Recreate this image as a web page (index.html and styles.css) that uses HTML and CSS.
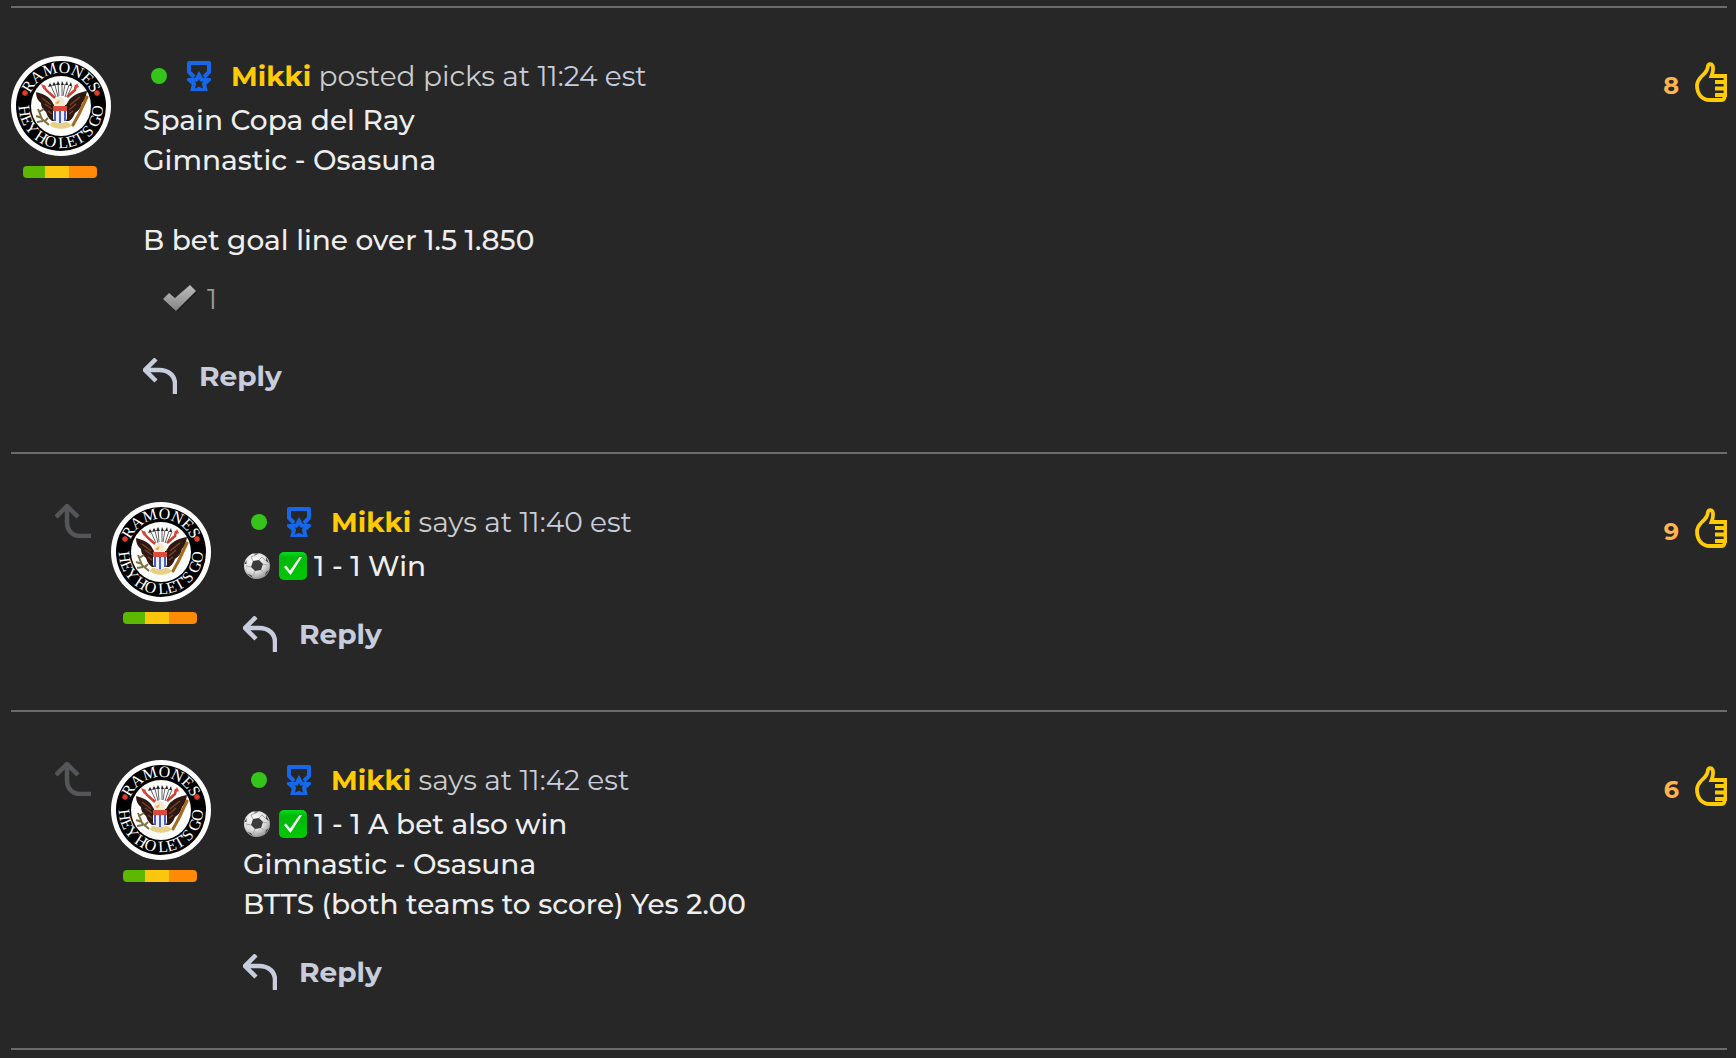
FILE: index.html
```
<!DOCTYPE html>
<html lang="en">
  <head>
    <meta charset="utf-8">
    <meta name="viewport" content="width=device-width, initial-scale=1">
    <title>Picks</title>
    <link rel="stylesheet" href="styles.css">
  </head>

  <body>
    <!-- Shared drawings -->
    <svg class="sprites" aria-hidden="true">
      <defs>
        <linearGradient id="greyCheck" x1="0" y1="0" x2="0" y2="1">
          <stop offset="0" stop-color="#bdbdbd"/>
          <stop offset="1" stop-color="#858585"/>
        </linearGradient>
        <radialGradient id="ballShade" cx="0.4" cy="0.3" r="0.75">
          <stop offset="0" stop-color="#ffffff"/>
          <stop offset="0.6" stop-color="#dcdcdc"/>
          <stop offset="1" stop-color="#8c8c8c"/>
        </radialGradient>
        <linearGradient id="greenBox" x1="0" y1="0" x2="0" y2="1">
          <stop offset="0" stop-color="#08dc20"/>
          <stop offset="0.2" stop-color="#00b80a"/>
          <stop offset="1" stop-color="#00c804"/>
        </linearGradient>
        <path id="ringTop" d="M17 50A33 33 0 0 1 83 50"/>
        <path id="ringBottom" d="M9 41A42 42 0 1 0 91 41"/>
      </defs>

      <symbol id="avatar" viewBox="0 0 100 100">
        <circle cx="50" cy="50" r="50" fill="#fff"/>
        <circle cx="50" cy="50" r="45" fill="#000"/>
        <circle cx="50" cy="50" r="30" fill="#fff"/>
        <text class="ring-text"><textPath href="#ringTop" startOffset="50%">RAMONES</textPath></text>
        <text class="ring-text"><textPath href="#ringBottom" startOffset="50%">HEY HO LET'S GO</textPath></text>
        <path d="M14 34v6M11 37h6M12 35l4 4M16 35l-4 4M86 34v6M83 37h6M84 35l4 4M88 35l-4 4" stroke="#e03a2a" stroke-width="1.5"/>
        <!-- arrows -->
        <path d="M40 30l5 11M44 29l3 12M47 28l1 12M51 28v12M54 28l-2 12M58 29l-4 12M61 30l-5 11" stroke="#666" stroke-width="1" fill="none"/>
        <path d="M37 31l2-4 2 3zM41 30l2-4 2 3zM45 29l2-4 2 4zM50 29l1-4 2 4zM54 29l2-4 1 4zM58 30l2-4 1 4z" fill="#222"/>
        <path d="M32 30l4 5 8 7M65 29l-1 5-8 7" stroke="#c9402e" stroke-width="2.5" fill="none"/>
        <path d="M30 28l5 2-2 4zM66 27l2 4-5 2z" fill="#e2452f"/>
        <!-- eagle -->
        <path d="M25 36c4 1 11 3 15 8l3 5h12l3-5c4-5 11-8 18-9-1 6-2 9-5 12-1 5-4 8-7 10-2 5-4 7-6 8H41c-4-3-5-6-6-9-4-3-5-6-5-9-4-3-5-7-5-12z" fill="#2d1812"/>
        <path d="M31 42l9 7M34 48l7 5M37 55l4 3M69 41l-10 8M65 48l-7 6M62 55l-4 3" stroke="#7c4426" stroke-width="1.3"/>
        <path d="M43 50c0-6 2-9 6-9s5 4 5 9z" fill="#f4ead2"/>
        <path d="M44 47l5-3-2 4z" fill="#e8a23a"/>
        <path d="M41 66h15l5 3c-4 5-18 5-22 0z" fill="#e7cf86"/>
        <!-- shield -->
        <path d="M42 50h14v13l-3 4h-8l-3-4z" fill="#eef"/>
        <path d="M42 50h14v5H42z" fill="#d94b3d"/>
        <path d="M44 55v10M49 55v12M54 55v10" stroke="#4b62bd" stroke-width="2"/>
        <!-- bat and branch -->
        <path d="M76 41l-8 17-6 11" stroke="#a8681f" stroke-width="3" stroke-linecap="round" fill="none"/>
        <path d="M27 53l4 10 7 6M25 60l6 2M28 56l5-3M26 66l6-1M33 66l4-4" stroke="#7b7143" stroke-width="2" fill="none"/>
      </symbol>

      <symbol id="medal" viewBox="0 0 24 30">
        <g fill="none" stroke="#1668e8" stroke-width="4">
          <path d="M7 16L2 11V2h20v9L17 16" stroke-linejoin="round"/>
          <path d="M12 14l2.500 4.500 7 .5-4.500 4 2 8-7-3-7 3 2-8-4.500-4 7-.5z"/>
        </g>
      </symbol>

      <symbol id="thumb" viewBox="0 0 32 40">
        <path d="M32 14H16.500C18 10 18.500 6 17.500 3.500 16.500 1.500 13.500 1.500 13 4 12.500 10 9 12 6 15 3.500 17.500 2 20 2 23.500 2 32 7 38 15 38h12c2 0 3-2 2-5M32 20H20M32 26.500H20M32 33H20M30.500 13v20" fill="none" stroke="#ffcb05" stroke-width="3.800"/>
      </symbol>

      <symbol id="replyArrow" viewBox="0 0 34 36">
        <path d="M13 1L2 12l11 11M2 12h14c10 0 16 6 16 14v10" fill="none" stroke="#c8cddd" stroke-width="4.500"/>
      </symbol>

      <symbol id="threadArrow" viewBox="0 0 36 34">
        <path d="M1 13L12 2l11 11M12 2v16c0 9 6 14 13 14h11" fill="none" stroke="#55565a" stroke-width="4.500"/>
      </symbol>

      <symbol id="greyTick" viewBox="0 0 34 28">
        <path d="M1 15l6-7 6 5L27 1l6 5-20 20z" transform="translate(1 1)" fill="#1c1c1c"/>
        <path d="M0 14l6-6 6 5L27 0l6 6-20 20z" fill="url(#greyCheck)"/>
      </symbol>

      <symbol id="ball" viewBox="0 0 28 28">
        <circle cx="14" cy="14" r="13" fill="url(#ballShade)"/>
        <path d="M10 9l6-1 4 4-2 6-6 1-4-4z" fill="#3c3c3c"/>
        <path d="M10 1.500l6-.5-3 2zM23 5l3 6-3-2zM26 18l-4 6 1-4zM10 26l-6-4 4 1zM1.500 12l2-4 0 4z" fill="#4a4a4a"/>
        <path d="M10 9L8 5l5-2M16 8l3-3 4 4M20 12l4 1M18 18l4 3M12 19l-2 5M8 15l-5-1" stroke="#a8a8a8" fill="none"/>
      </symbol>

      <symbol id="greenTick" viewBox="0 0 28 28">
        <rect width="28" height="28" rx="5" fill="url(#greenBox)"/>
        <path d="M5 15l2-1.500 4 5L20.500 5H23L11.500 23z" fill="#fff"/>
      </symbol>
    </svg>

    <main class="feed">
      <article class="post">
        <div class="user">
          <svg class="avatar" role="img" aria-label="Mikki"><use href="#avatar"/></svg>
          <div class="level"></div>
        </div>
        <div class="content">
          <header class="post-header">
            <span class="online"></span>
            <svg class="medal"><use href="#medal"/></svg>
            <p><a href="#" class="name">Mikki</a> posted picks <span class="time">at 11:24 est</span></p>
          </header>
          <p class="text">Spain Copa del Ray<br>Gimnastic - Osasuna<br><br>B bet goal line over 1.5 1.850</p>
          <div class="reaction">
            <svg class="grey-tick"><use href="#greyTick"/></svg>
            <span>1</span>
          </div>
          <button type="button" class="reply"><svg class="reply-arrow"><use href="#replyArrow"/></svg>Reply</button>
        </div>
        <button type="button" class="like">8<svg class="thumb"><use href="#thumb"/></svg></button>
      </article>

      <article class="post">
        <svg class="thread-arrow"><use href="#threadArrow"/></svg>
        <div class="user">
          <svg class="avatar" role="img" aria-label="Mikki"><use href="#avatar"/></svg>
          <div class="level"></div>
        </div>
        <div class="content">
          <header class="post-header">
            <span class="online"></span>
            <svg class="medal"><use href="#medal"/></svg>
            <p><a href="#" class="name">Mikki</a> says <span class="time">at 11:40 est</span></p>
          </header>
          <p class="text"><svg class="emoji"><use href="#ball"/></svg><svg class="emoji"><use href="#greenTick"/></svg>1 - 1 Win</p>
          <button type="button" class="reply"><svg class="reply-arrow"><use href="#replyArrow"/></svg>Reply</button>
        </div>
        <button type="button" class="like">9<svg class="thumb"><use href="#thumb"/></svg></button>
      </article>

      <article class="post">
        <svg class="thread-arrow"><use href="#threadArrow"/></svg>
        <div class="user">
          <svg class="avatar" role="img" aria-label="Mikki"><use href="#avatar"/></svg>
          <div class="level"></div>
        </div>
        <div class="content">
          <header class="post-header">
            <span class="online"></span>
            <svg class="medal"><use href="#medal"/></svg>
            <p><a href="#" class="name">Mikki</a> says <span class="time">at 11:42 est</span></p>
          </header>
          <p class="text"><svg class="emoji"><use href="#ball"/></svg><svg class="emoji"><use href="#greenTick"/></svg>1 - 1 A bet also win<br>Gimnastic - Osasuna<br>BTTS (both teams to score) Yes 2.00</p>
          <button type="button" class="reply"><svg class="reply-arrow"><use href="#replyArrow"/></svg>Reply</button>
        </div>
        <button type="button" class="like">6<svg class="thumb"><use href="#thumb"/></svg></button>
      </article>
    </main>
  </body>
</html>
```

FILE: styles.css
```
body {
  margin: 0;
  background-color: #272727;
  color: #eeeeee;
  font-family: Montserrat, Inter, sans-serif;
  font-size: 28px;
  font-weight: 500;
  line-height: 40px;
}

p {
  margin: 0;
}

button {
  border: none;
  padding: 0;
  background: none;
  font: inherit;
  cursor: pointer;
}

.sprites {
  position: absolute;
  width: 0;
  height: 0;
}

.ring-text {
  fill: #fff;
  font-family: "Liberation Serif", serif;
  font-size: 16px;
  font-weight: 400;
  text-anchor: middle;
}

.feed {
  margin: 6px 9px 0 11px;
  border-bottom: 2px solid #6b6b6b;
}

.post {
  display: flex;
  align-items: flex-start;
  border-top: 2px solid #6b6b6b;
  padding: 48px 0 56px;
}

.thread-arrow {
  width: 36px;
  height: 34px;
  margin: 2px 20px 0 44px;
}

.user {
  width: 100px;
  margin-right: 32px;
}

.avatar {
  display: block;
  width: 100px;
  height: 100px;
}

/* Green / yellow / orange bar under the avatar */
.level {
  width: 74px;
  height: 12px;
  margin: 10px 0 0 12px;
  border-radius: 4px;
  background: linear-gradient(to right, #5cb800 22px, #fcc60f 22px, #fcc60f 46px, #ff8a05 46px);
}

.content {
  flex: 1;
}

.post-header {
  display: flex;
  align-items: center;
  height: 40px;
  margin-bottom: 4px;
  color: #cccccc;
  font-weight: 400;
}

.online {
  width: 16px;
  height: 16px;
  margin: 0 20px 0 8px;
  border-radius: 50%;
  background-color: #37c41a;
}

.medal {
  width: 24px;
  height: 30px;
  margin-right: 20px;
}

.name {
  color: #ffcb05;
  font-weight: 700;
  text-decoration: none;
}

.time {
  color: #c8cddd;
}

.emoji {
  width: 28px;
  height: 28px;
  margin-right: 8px;
  vertical-align: -4px;
}

.emoji + .emoji {
  margin-right: 7px;
}

.reaction {
  display: flex;
  align-items: center;
  gap: 10px;
  margin: 19px 0 37px 20px;
  color: #999999;
  font-weight: 400;
}

.grey-tick {
  width: 34px;
  height: 28px;
}

.reply {
  display: flex;
  align-items: center;
  gap: 22px;
  margin-top: 28px;
  color: #c8cddd;
  font-weight: 700;
}

.reply-arrow {
  width: 34px;
  height: 36px;
}

.like {
  display: flex;
  align-items: flex-end;
  gap: 16px;
  margin-top: 6px;
  color: #ffb44d;
  font-size: 24px;
  font-weight: 700;
  line-height: 32px;
}

.thumb {
  width: 32px;
  height: 40px;
}
```
